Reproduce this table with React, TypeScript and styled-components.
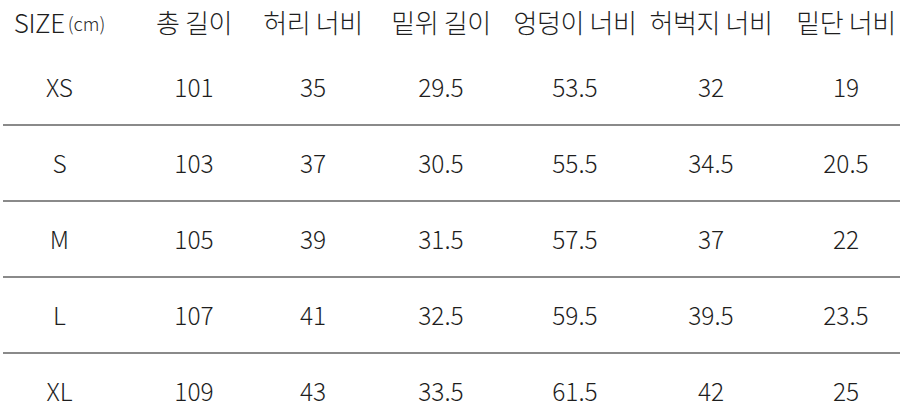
import styled, { createGlobalStyle } from 'styled-components'

const GlobalStyle = createGlobalStyle`
  html, body {
    margin: 0;
    padding: 0;
    background: #ffffff;
  }
  body {
    font-family: "Noto Sans CJK KR", "Noto Sans", sans-serif;
    color: #1e1e1e;
  }
`

// column widths picked so each centred cell lands where the chart has it
const COLUMNS = '113px 156px 82px 174px 94px 178px 92px'

const Chart = styled.div`
  width: 913px;
  height: 418px;
  overflow: hidden;
  display: flex;
  flex-direction: column;
`

const HeaderRow = styled.div`
  display: grid;
  grid-template-columns: ${COLUMNS};
  flex-shrink: 0;
  height: 44px;
  margin: 0 0 6px 3px;
  align-items: center;
`

const Row = styled.div<{ $last?: boolean }>`
  display: grid;
  grid-template-columns: ${COLUMNS};
  flex-shrink: 0;
  height: 74px;
  margin-left: 3px;
  width: 897px;
  align-items: center;
  border-bottom: 2px solid ${(p) => (p.$last ? 'transparent' : '#8a8a8a')};
`

const Cell = styled.div`
  display: flex;
  justify-content: center;
  white-space: nowrap;
  font-size: 24.5px;
  line-height: 1;
  font-weight: 300;
`

const HeadCell = styled(Cell)`
  font-size: 26px;
  letter-spacing: -0.4px;
`

const Unit = styled.span`
  font-size: 18.5px;
  margin-left: 3px;
  align-self: center;
  color: #2a2a2a;
  padding-top: 2px;
  letter-spacing: 0;
`

const headers = ['총 길이', '허리 너비', '밑위 길이', '엉덩이 너비', '허벅지 너비', '밑단 너비']

const rows: [string, string, string, string, string, string, string][] = [
  ['XS', '101', '35', '29.5', '53.5', '32', '19'],
  ['S', '103', '37', '30.5', '55.5', '34.5', '20.5'],
  ['M', '105', '39', '31.5', '57.5', '37', '22'],
  ['L', '107', '41', '32.5', '59.5', '39.5', '23.5'],
  ['XL', '109', '43', '33.5', '61.5', '42', '25'],
]

export default function App() {
  return (
    <>
      <GlobalStyle />
      <Chart>
        <HeaderRow>
          <HeadCell>
            SIZE<Unit>(cm)</Unit>
          </HeadCell>
          {headers.map((h) => (
            <HeadCell key={h}>{h}</HeadCell>
          ))}
        </HeaderRow>
        {rows.map((r, i) => (
          <Row key={r[0]} $last={i === rows.length - 1}>
            {r.map((v, j) => (
              <Cell key={j}>{v}</Cell>
            ))}
          </Row>
        ))}
      </Chart>
    </>
  )
}
